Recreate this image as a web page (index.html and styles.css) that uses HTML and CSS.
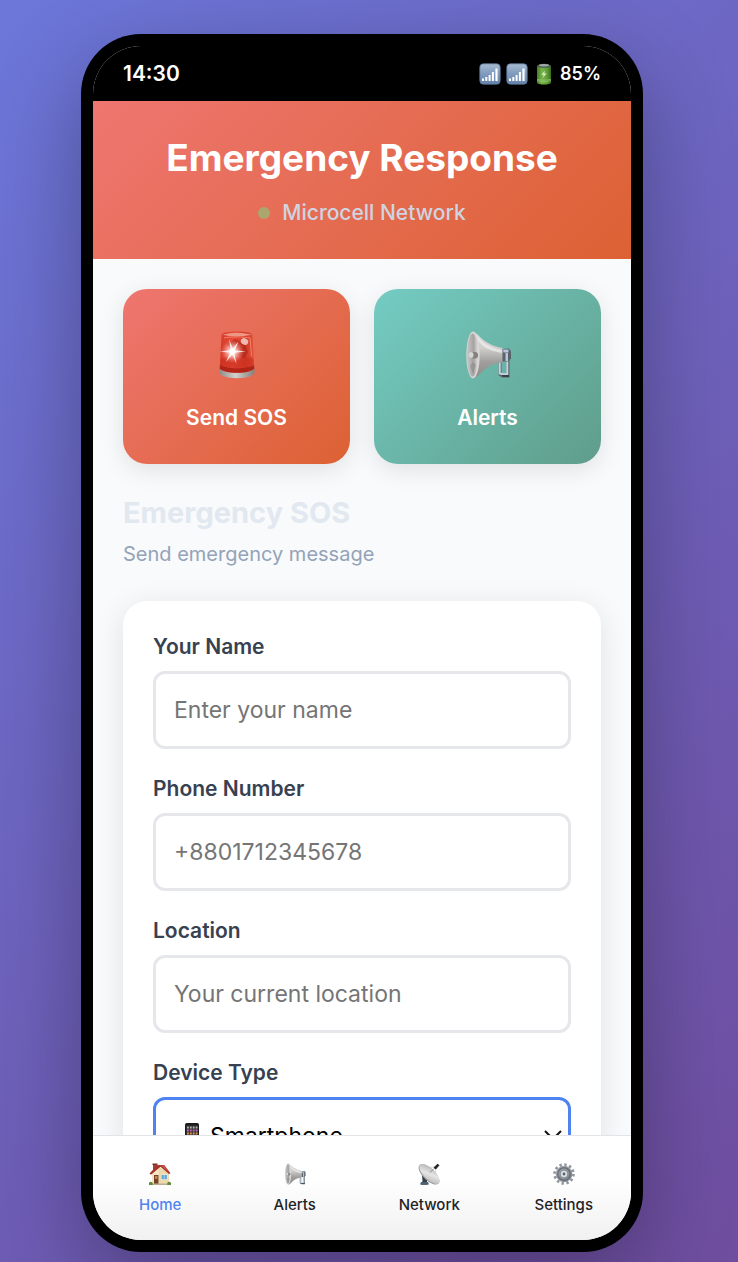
FILE: index.html
```html
<!DOCTYPE html>
<html lang="en">
<head>
<meta charset="utf-8">
<meta name="viewport" content="width=device-width, initial-scale=1">
<title>Emergency Response</title>
<link rel="stylesheet" href="styles.css">
</head>
<body>
<svg class="sprite" aria-hidden="true">
  <defs>
    <linearGradient id="g-signal" x1="0" y1="0" x2="0" y2="1"><stop offset="0" stop-color="#a9bcd2"/><stop offset=".5" stop-color="#7f9abd"/><stop offset="1" stop-color="#6683ab"/></linearGradient>
    <linearGradient id="g-battery" x1="0" y1="0" x2="1" y2="0"><stop offset="0" stop-color="#467d28"/><stop offset=".35" stop-color="#79b54a"/><stop offset=".7" stop-color="#62a038"/><stop offset="1" stop-color="#376d20"/></linearGradient>
    <linearGradient id="g-dome" x1="0" y1="0" x2="1" y2="0"><stop offset="0" stop-color="#d63a2b"/><stop offset=".4" stop-color="#e84b38"/><stop offset=".75" stop-color="#d23a25"/><stop offset="1" stop-color="#e4553f"/></linearGradient>
    <linearGradient id="g-base" x1="0" y1="0" x2="1" y2="0"><stop offset="0" stop-color="#8f8a86"/><stop offset=".45" stop-color="#d2d0cd"/><stop offset="1" stop-color="#85807c"/></linearGradient>
    <radialGradient id="g-flash"><stop offset="0" stop-color="#fff"/><stop offset=".3" stop-color="#ffd9d2" stop-opacity=".9"/><stop offset="1" stop-color="#ff9a8c" stop-opacity="0"/></radialGradient>
    <linearGradient id="g-horn" x1="0" y1="0" x2="0" y2="1"><stop offset="0" stop-color="#d9d8d7"/><stop offset=".35" stop-color="#cfcecd"/><stop offset=".65" stop-color="#a09e9d"/><stop offset="1" stop-color="#8e8c8b"/></linearGradient>
    <linearGradient id="g-bell" x1="0" y1="0" x2="1" y2="0"><stop offset="0" stop-color="#c9c8c7"/><stop offset=".6" stop-color="#a5a3a2"/><stop offset="1" stop-color="#dddcdb"/></linearGradient>
    <linearGradient id="g-dish" x1="0" y1="0" x2="1" y2="1"><stop offset="0" stop-color="#aaa9a8"/><stop offset=".5" stop-color="#e6e5e5"/><stop offset="1" stop-color="#b2b1b0"/></linearGradient>
    <linearGradient id="g-gear" x1="0" y1="0" x2="1" y2="1"><stop offset="0" stop-color="#aeb4ba"/><stop offset="1" stop-color="#7b8289"/></linearGradient>
  </defs>
  <symbol id="i-signal" viewBox="0 0 22 22">
    <rect x=".8" y=".8" width="20.400" height="20.400" rx="3.500" fill="url(#g-signal)" stroke="#5b7598" stroke-width=".8"/>
    <path d="M3 15.500h2V18H3zM6.300 14h2v4h-2zM9.600 12h2v6h-2zM12.900 9h2v9h-2zM16.400 5.500h2.200V18h-2.200z" fill="#fff"/>
  </symbol>
  <symbol id="i-battery" viewBox="0 0 22 22">
    <path d="M4 3v16.500c0 2.700 14 2.700 14 0V3z" fill="url(#g-battery)"/>
    <path d="M4 17.500c3 1.400 11 1.400 14 0M4 16.200c3 1.300 11 1.300 14 0" stroke="#a6cf83" stroke-width=".6" fill="none"/>
    <ellipse cx="11" cy="2.800" rx="7" ry="2" fill="#4d5b55"/>
    <ellipse cx="11" cy="2.200" rx="5" ry="1.200" fill="#9daaa3"/>
    <path d="M11.800 7.800l-3.500 4h2.300l-.8 2.900 3.900-4.100h-2.300z" fill="#d6edc3"/>
  </symbol>
  <symbol id="i-siren" viewBox="0 0 48 48">
    <path d="M6.500 36.500v5.300c1 7.200 34 7.200 35 0v-5.300z" fill="url(#g-base)"/>
    <path d="M8.500 4.500Q8.700 2.300 12 1.600Q24 -.4 36 1.600Q39.300 2.300 39.500 4.500L41.300 37.500C37 43.200 11 43.200 6.700 37.500z" fill="url(#g-dome)"/>
    <path d="M7.300 33.500c5 5 28.400 5 33.400 0l.6 4C37 43.200 11 43.200 6.700 37.500z" fill="#a91e12" opacity=".85"/>
    <path d="M7.500 28c5 -3.500 28 -3.500 33 0v5.500c-5 4.500-28 4.500-33 0z" fill="#c92f1f" opacity=".6"/>
    <path d="M9.300 3.700Q24 -.2 38.700 3.700Q24 6.800 9.300 3.700z" fill="#ee9784"/>
    <path d="M11 7c6-1.500 20-1.500 26 0l1.500 18" fill="none" stroke="#f3826b" stroke-width="1"/>
    <path d="M14 13l8-5 10 5 3 8-3 6-10-3z" fill="#a42318" opacity=".55"/>
    <ellipse cx="31.500" cy="10.500" rx="3.800" ry="3.200" fill="#f0b8b1" transform="rotate(30 31.500 10.500)"/>
    <circle cx="19.500" cy="20.500" r="11.500" fill="url(#g-flash)"/>
    <path d="M19.500 19L33 20.500 19.500 22 6.500 20.500zM18 20.500L16 8 21 20.500 23.500 33zM18 19.500L25.500 10.500 21 21.500 13 31z" fill="#fff" opacity=".8"/>
    <circle cx="19.500" cy="20.500" r="2.800" fill="#fff"/>
  </symbol>
  <symbol id="i-horn" viewBox="0 0 48 48">
    <path d="M36 31v12.500l2.500 1.500h5.500V26" fill="none" stroke="#5a636c" stroke-width="3"/>
    <path d="M35.700 31v11.500l3 .8h4.600V24" fill="none" stroke="#c3d3e3" stroke-width="2"/>
    <path d="M37.500 44h7.500v2h-6z" fill="#3a4047"/>
    <path d="M38 18l7-.5 2 3v7l-3 3h-6z" fill="#59616a"/>
    <path d="M39 18.500h5.500v3h-5zM41.500 22h2.500v8h-2.500z" fill="#b8c8dc"/>
    <path d="M9 .7C15 2 18 13 38.500 17v14.500C21 32.500 16 46 9.500 47.500z" fill="url(#g-horn)"/>
    <path d="M13 4c5 8 13 12.500 25 15v3C25 20 17 15 13 8z" fill="#efeeee" opacity=".7"/>
    <ellipse cx="9" cy="24" rx="6.700" ry="23.500" fill="#d7d6d5"/>
    <ellipse cx="8.500" cy="24" rx="5.500" ry="21.500" fill="url(#g-bell)"/>
    <path d="M6 35l3-4 3 3-3 9z" fill="#858382" opacity=".5"/>
    <rect x="5.500" y="21" width="8.500" height="6.500" rx="3" fill="#848281"/>
    <ellipse cx="7.200" cy="24" rx="2.300" ry="3" fill="#d8d7d6"/>
  </symbol>
  <symbol id="i-house" viewBox="0 0 22 22">
    <path d="M3 9.500L9 3l11 7v11H3z" fill="#eed9ad"/>
    <path d="M3 9.500L9 3l1 7v11H3z" fill="#f7e6c2"/>
    <path d="M4 1h4v5L4 8z" fill="#a53e2e"/><path d="M3.500.5h5v1.500h-5z" fill="#7d2f28"/>
    <path d="M.5 10.500L8.500 2h6.700l6.300 8.300-1.500.8-8.500-7.300-9.500 8z" fill="#a8322c"/>
    <path d="M10 2.500h4.900l4.900 6.500-7.300-6z" fill="#ca5a4a"/>
    <rect x="5" y="12" width="4.500" height="9" fill="#764328"/><rect x="6" y="13" width="2.500" height="3" fill="#bd8a56"/>
    <rect x="12" y="11.500" width="6.500" height="5.500" fill="#efefe7"/><rect x="12.600" y="12" width="5.300" height="4.300" fill="#5ba6d3"/><path d="M15.200 12v4.300" stroke="#e3eef4" stroke-width=".6"/>
    <path d="M3 20.500h17V22H3z" fill="#bcae91"/>
    <path d="M0 22v-2.200q1.500-2 3.700 0V22zM18.300 22v-2.200q2-2 3.700.2v2z" fill="#5d8b38"/>
  </symbol>
  <symbol id="i-dish" viewBox="0 0 22 22">
    <path d="M4 12l5 4.500V21l1 .7H3L4.500 18z" fill="#353d46"/>
    <path d="M3 19h7l1 2.600H2z" fill="#4d6172"/>
    <path d="M9 5l8-1.500M18 5l-1 9" stroke="#b8b8b8" stroke-width=".5"/>
    <ellipse cx="11" cy="11.300" rx="13.200" ry="6.100" transform="rotate(44 11 11.300)" fill="#9a9a99"/>
    <ellipse cx="11.500" cy="11" rx="13" ry="5.500" transform="rotate(44 11.500 11)" fill="url(#g-dish)"/>
    <path d="M12 9.500l4-4" stroke="#737577" stroke-width=".8"/>
    <path d="M15.500 4.800L19.500.8l2 1.400-3.700 4.300z" fill="#25282b"/>
  </symbol>
  <symbol id="i-gear" viewBox="0 0 22 22">
    <circle cx="11" cy="11" r="9.300" fill="none" stroke="#92989e" stroke-width="3" stroke-dasharray="2.400 2.470"/>
    <circle cx="11" cy="11" r="8.300" fill="url(#g-gear)"/>
    <circle cx="11" cy="11" r="6.200" fill="none" stroke="#697077" stroke-width="1.500"/>
    <circle cx="11" cy="11" r="4.600" fill="#8a9198"/>
    <circle cx="11" cy="11" r="3.200" fill="#dcdfe2"/>
    <circle cx="11" cy="11" r="1.400" fill="#5a6168"/>
  </symbol>
  <symbol id="i-phone" viewBox="0 0 14 24">
    <rect width="14" height="24" rx="1.800" fill="#1c1c1e"/>
    <rect x="1.300" y="2.500" width="11.400" height="18" fill="#35343b"/>
    <g stroke-width="1.800" stroke-dasharray="1.800 1.100" fill="none"><path d="M2 4.500h10.500" stroke="#b3b0a9"/><path d="M2 7.500h10.500" stroke="#bf69a8"/><path d="M2 10.500h10.500" stroke="#e19a45"/><path d="M2 13.500h10.500" stroke="#5ca7dd"/><path d="M2 18.500h10.500" stroke="#68b45d"/></g>
  </symbol>
</svg>

<div class="phone">
  <div class="screen">
    <div class="status">
      <span>14:30</span>
      <span class="status-icons">
        <svg class="icon-small"><use href="#i-signal"/></svg>
        <svg class="icon-small"><use href="#i-signal"/></svg>
        <svg class="icon-small"><use href="#i-battery"/></svg>
        <span class="charge">85%</span>
      </span>
    </div>
    <header class="header">
      <h1 class="title">Emergency Response</h1>
      <p class="network"><span class="dot"></span>Microcell Network</p>
    </header>
    <main class="content">
      <div class="actions">
        <button class="action action-sos" type="button"><svg class="icon-large"><use href="#i-siren"/></svg>Send SOS</button>
        <button class="action action-alerts" type="button"><svg class="icon-large"><use href="#i-horn"/></svg>Alerts</button>
      </div>
      <h2 class="section-title">Emergency SOS</h2>
      <p class="section-text">Send emergency message</p>
      <form class="card">
        <div class="field">
          <label class="label" for="name">Your Name</label>
          <input class="control" id="name" type="text" placeholder="Enter your name">
        </div>
        <div class="field">
          <label class="label" for="phone">Phone Number</label>
          <input class="control" id="phone" type="tel" placeholder="+8801712345678">
        </div>
        <div class="field">
          <label class="label" for="location">Location</label>
          <input class="control" id="location" type="text" placeholder="Your current location">
        </div>
        <div class="field">
          <label class="label" for="device">Device Type</label>
          <div class="select-wrap">
            <select class="control select" id="device"><option>Smartphone</option></select>
            <svg class="select-icon"><use href="#i-phone"/></svg>
            <svg class="chevron" viewBox="0 0 18 10"><path d="M1 1l8 8 8-8" fill="none" stroke="#111" stroke-width="2"/></svg>
          </div>
        </div>
      </form>
    </main>
    <nav class="nav">
      <a class="nav-item nav-active" href="#home"><svg class="icon-small"><use href="#i-house"/></svg>Home</a>
      <a class="nav-item" href="#alerts"><svg class="icon-small"><use href="#i-horn"/></svg>Alerts</a>
      <a class="nav-item" href="#network"><svg class="icon-small"><use href="#i-dish"/></svg>Network</a>
      <a class="nav-item" href="#settings"><svg class="icon-small"><use href="#i-gear"/></svg>Settings</a>
    </nav>
  </div>
</div>
</body>
</html>
```
FILE: styles.css
```css
* { box-sizing: border-box; margin: 0; }

body {
  min-height: 100vh;
  padding: 34px 14px 10px 0;
  display: flex;
  justify-content: center;
  background: linear-gradient(135deg, #6c77da, #6f4d9f);
  font-family: Inter, "Liberation Sans", sans-serif;
  color: #1f2328;
}

.sprite { position: absolute; width: 0; height: 0; }
.icon-small { width: 22px; height: 22px; }
.icon-large { width: 48px; height: 48px; }

.phone {
  width: 100%;
  max-width: 562px;
  height: calc(100vh - 44px);
  padding: 12px;
  background: #000;
  border-radius: 60px;
  box-shadow: 0 30px 90px rgba(0, 0, 0, .3);
}

.screen {
  height: 100%;
  display: flex;
  flex-direction: column;
  overflow: hidden;
  border-radius: 48px;
  background: #f8fafc;
}

.status {
  flex: none;
  height: 55px;
  padding: 0 30px;
  display: flex;
  align-items: center;
  justify-content: space-between;
  background: #000;
  color: #fff;
  font-size: 21px;
  font-weight: 600;
}
.status-icons { display: flex; align-items: center; gap: 5px; }
.charge { font-size: 18px; }

.header {
  flex: none;
  padding: 30px;
  background: linear-gradient(135deg, #ee7670, #dc6133);
  text-align: center;
}
.title {
  margin-bottom: 12px;
  color: #fff;
  font-size: 37px;
  line-height: 54px;
  font-weight: 700;
}
.network {
  display: flex;
  align-items: center;
  justify-content: center;
  gap: 12px;
  color: #cfd5e0;
  font-size: 21px;
  line-height: 32px;
  font-weight: 500;
}
.dot { width: 12px; height: 12px; border-radius: 50%; background: #aba66e; }

.content {
  flex: 1;
  min-height: 0;
  padding: 30px;
  overflow-y: auto;
  scrollbar-width: none;
}

.actions {
  display: grid;
  grid-template-columns: 1fr 1fr;
  gap: 24px;
  margin-bottom: 24px;
}
.action {
  padding: 42px 24px 30px;
  display: flex;
  flex-direction: column;
  align-items: center;
  gap: 23px;
  border: 0;
  border-radius: 24px;
  color: #fff;
  font: 600 21px/32px Inter, "Liberation Sans", sans-serif;
  box-shadow: 0 6px 24px rgba(0, 0, 0, .1);
}
.action-sos { background: linear-gradient(135deg, #ee7670, #dc6133); }
.action-alerts { background: linear-gradient(135deg, #74ccc3, #5f9d8a); }

.section-title {
  color: #e2e8f0;
  font-size: 29px;
  line-height: 50px;
  font-weight: 700;
}
.section-text {
  margin-bottom: 30px;
  color: #94a3b8;
  font-size: 20px;
  line-height: 33px;
}

.card {
  padding: 30px;
  display: grid;
  gap: 24px;
  border-radius: 24px;
  background: #fff;
  box-shadow: 0 6px 30px rgba(0, 0, 0, .1);
}
.label {
  display: block;
  margin-bottom: 8px;
  color: #374151;
  font-size: 21px;
  line-height: 32px;
  font-weight: 600;
}
.control {
  display: block;
  width: 100%;
  height: 78px;
  padding: 0 18px;
  border: 3px solid #e5e7eb;
  border-radius: 12px;
  outline: 0;
  background: #fff;
  color: #000;
  font: 400 23px Inter, "Liberation Sans", sans-serif;
}
.control::placeholder { color: #757575; opacity: 1; }

.select-wrap { position: relative; }
.select { appearance: none; padding-left: 54px; border-color: #4f83f1; }
.select-icon { position: absolute; left: 32px; top: 26px; width: 14px; height: 24px; pointer-events: none; }
.chevron { position: absolute; right: 9px; top: 33px; width: 18px; height: 10px; pointer-events: none; }

.nav {
  flex: none;
  display: grid;
  grid-template-columns: repeat(4, 1fr);
  padding: 27px 0 24px;
  border-top: 1px solid #e2e4e8;
  background: linear-gradient(#fff 40%, #f1f1f1);
}
.nav-item {
  display: flex;
  flex-direction: column;
  align-items: center;
  gap: 9px;
  color: #1f2328;
  font-size: 15px;
  line-height: 22px;
  font-weight: 500;
  text-decoration: none;
}
.nav-active { color: #4f83f1; }
```
